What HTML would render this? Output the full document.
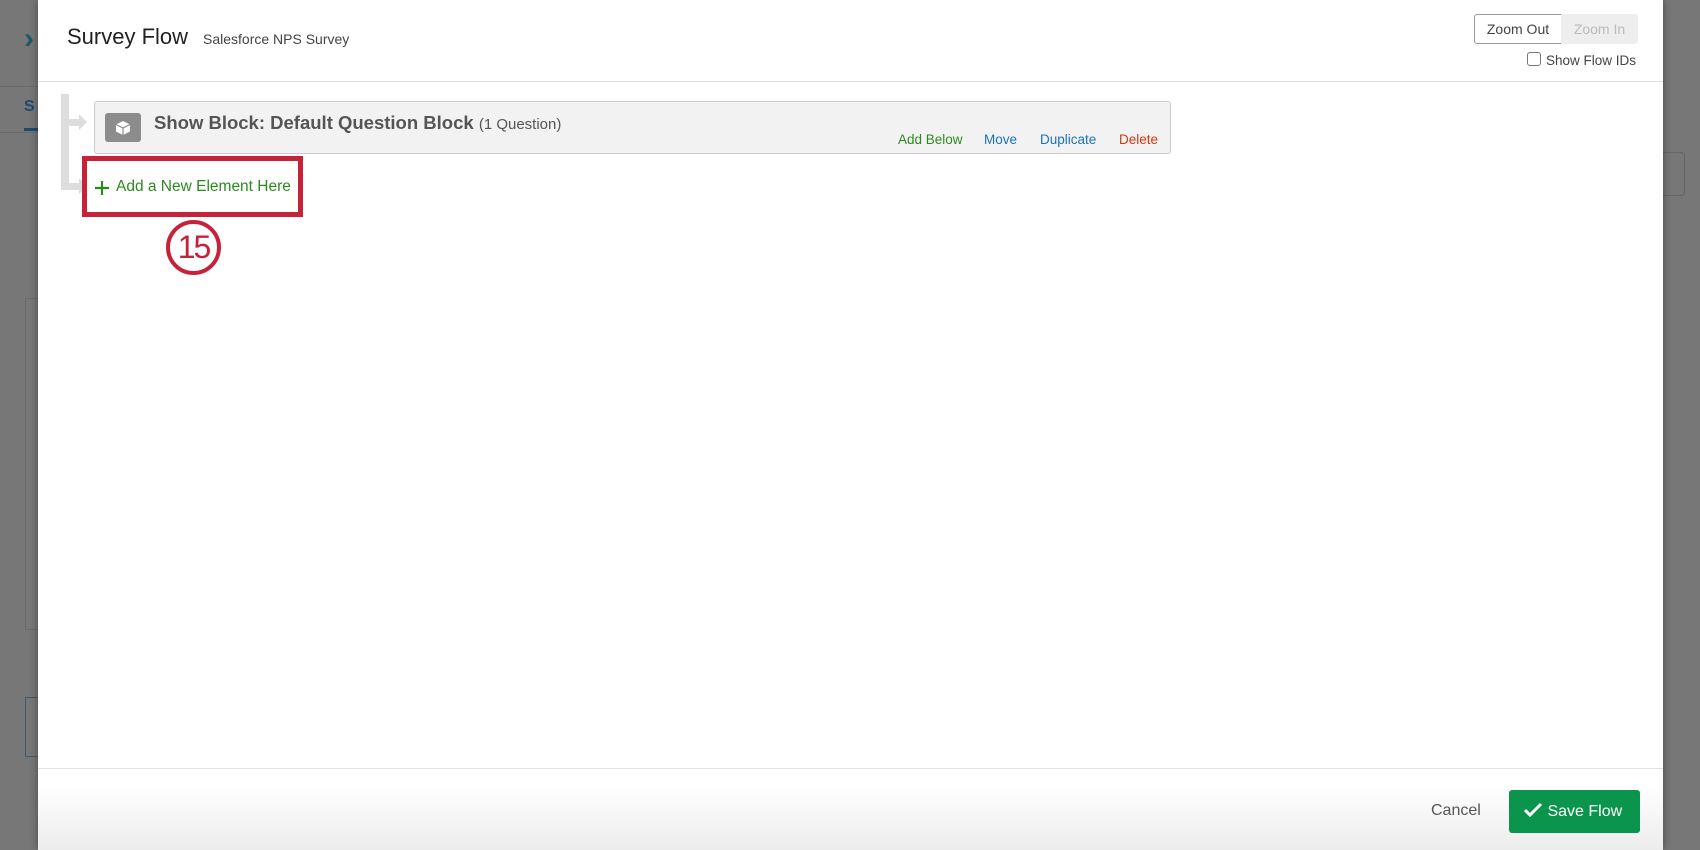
<!DOCTYPE html>
<html><head><meta charset="utf-8"><style>
*{margin:0;padding:0;box-sizing:border-box}
body{width:1700px;height:850px;overflow:hidden;background:#777;font-family:"Liberation Sans",sans-serif;position:relative}
.abs{position:absolute}
.modal{left:38px;top:0;width:1625px;height:850px;background:#fff;box-shadow:0 0 8px rgba(0,0,0,.4)}
</style></head><body>
<div class="abs" style="left:0;top:0;width:1700px;height:850px;background:#777"></div>
<div class="abs" style="left:0;top:86px;width:38px;height:1px;background:#6a6a6a"></div>
<div class="abs" style="left:0;top:132px;width:38px;height:1px;background:#6a6a6a"></div>
<div class="abs" style="left:24px;top:98px;color:#1c4a6e;font-weight:bold;font-size:16px">S</div>
<div class="abs" style="left:24px;top:128px;width:14px;height:3px;background:#1c4a6e"></div>
<div class="abs" style="left:24px;color:#1c5a66;font-weight:bold;font-size:30px;top:22px">›</div>
<div class="abs" style="left:25px;top:298px;width:14px;height:332px;border:1px solid #6a6a6a;border-right:none"></div>
<div class="abs" style="left:25px;top:697px;width:14px;height:60px;border:1px solid #3e5a76;border-right:none"></div>
<div class="abs" style="left:1663px;top:152px;width:22px;height:44px;border:1px solid #666;border-left:none;border-radius:0 4px 4px 0"></div>

<div class="abs modal">
  <div class="abs" style="left:29px;top:24px;font-size:22px;color:#222">Survey Flow</div>
  <div class="abs" style="left:165px;top:31px;font-size:14px;color:#444">Salesforce NPS Survey</div>
  <div class="abs" style="left:1436px;top:14px;width:88px;height:30px;border:1px solid #999;border-radius:3px 0 0 3px;font-size:14px;color:#444;text-align:center;line-height:28px">Zoom Out</div>
  <div class="abs" style="left:1523px;top:14px;width:77px;height:30px;background:#eee;border-radius:0 3px 3px 0;font-size:14px;color:#bbb;text-align:center;line-height:30px">Zoom In</div>
  <div class="abs" style="left:1489px;top:52px;width:14px;height:14px;border:1px solid #777;border-radius:3px"></div>
  <div class="abs" style="left:1508px;top:53px;font-size:13.5px;color:#444">Show Flow IDs</div>
  <div class="abs" style="left:0;top:81px;width:1625px;height:1px;background:#e2e2e2"></div>

  <div class="abs" style="left:23px;top:94px;width:8px;height:96px;background:#ddd"></div>
  <div class="abs" style="left:31px;top:119px;width:10px;height:7px;background:#ddd"></div>
  <div class="abs" style="left:41px;top:114px;width:0;height:0;border-top:8px solid transparent;border-bottom:8px solid transparent;border-left:8px solid #ddd"></div>
  <div class="abs" style="left:31px;top:183px;width:10px;height:7px;background:#ddd"></div>
  <div class="abs" style="left:41px;top:178px;width:0;height:0;border-top:8px solid transparent;border-bottom:8px solid transparent;border-left:8px solid #ddd"></div>

  <div class="abs" style="left:56px;top:101px;width:1077px;height:53px;background:#f2f2f2;border:1px solid #ccc;border-radius:3px"></div>
  <div class="abs" style="left:67px;top:113px;width:36px;height:29px;background:#8c8c8c;border-radius:3px">
    <svg width="36" height="29" viewBox="0 0 36 29"><path d="M18 8l7 3.5v7L18 22l-7-3.5v-7z" fill="#fff"/><path d="M11 11.5l7 3.5 7-3.5M18 15v7" stroke="#8c8c8c" stroke-width="1.2" fill="none"/></svg>
  </div>
  <div class="abs" style="left:116px;top:112px;font-size:18.5px;font-weight:bold;color:#555">Show Block: Default Question Block <span style="font-weight:normal;font-size:15px">(1 Question)</span></div>
  <div class="abs" style="left:860px;top:132px;font-size:13.5px;color:#2b8a1e">Add Below</div>
  <div class="abs" style="left:946px;top:132px;font-size:13.5px;color:#1a73b8">Move</div>
  <div class="abs" style="left:1002px;top:132px;font-size:13.5px;color:#1a73b8">Duplicate</div>
  <div class="abs" style="left:1081px;top:132px;font-size:13.5px;color:#d4380d">Delete</div>

  <div class="abs" style="left:44px;top:156px;width:221px;height:61px;border:5px solid #c4233a"></div>
  <svg class="abs" style="left:56px;top:180px" width="16" height="16" viewBox="0 0 16 16"><path d="M8 1v14M1 8h14" stroke="#2b8a1e" stroke-width="2.2"/></svg>
  <div class="abs" style="left:78px;top:178px;font-size:15.5px;color:#2b8a1e">Add a New Element Here</div>
  <div class="abs" style="left:128px;top:220px;width:55px;height:55px;border:4px solid #c4233a;border-radius:50%;color:#c4233a;font-size:32px;text-align:center;line-height:47px;letter-spacing:-2px">15</div>

  <div class="abs" style="left:0;top:768px;width:1625px;height:82px;border-top:1px solid #e2e2e2;background:linear-gradient(#fff 20%,#ececec)"></div>
  <div class="abs" style="left:1393px;top:802px;font-size:16px;color:#555">Cancel</div>
  <div class="abs" style="left:1471px;top:790px;width:131px;height:43px;background:#0a944c;border-radius:3px;color:#fff;font-size:16px;line-height:43px;padding-left:14px">
    <svg width="20" height="16" viewBox="0 0 20 16" style="vertical-align:-2px"><path d="M2 8l5 5 11-11" stroke="#fff" stroke-width="3" fill="none"/></svg> Save Flow</div>
</div>
</body></html>
